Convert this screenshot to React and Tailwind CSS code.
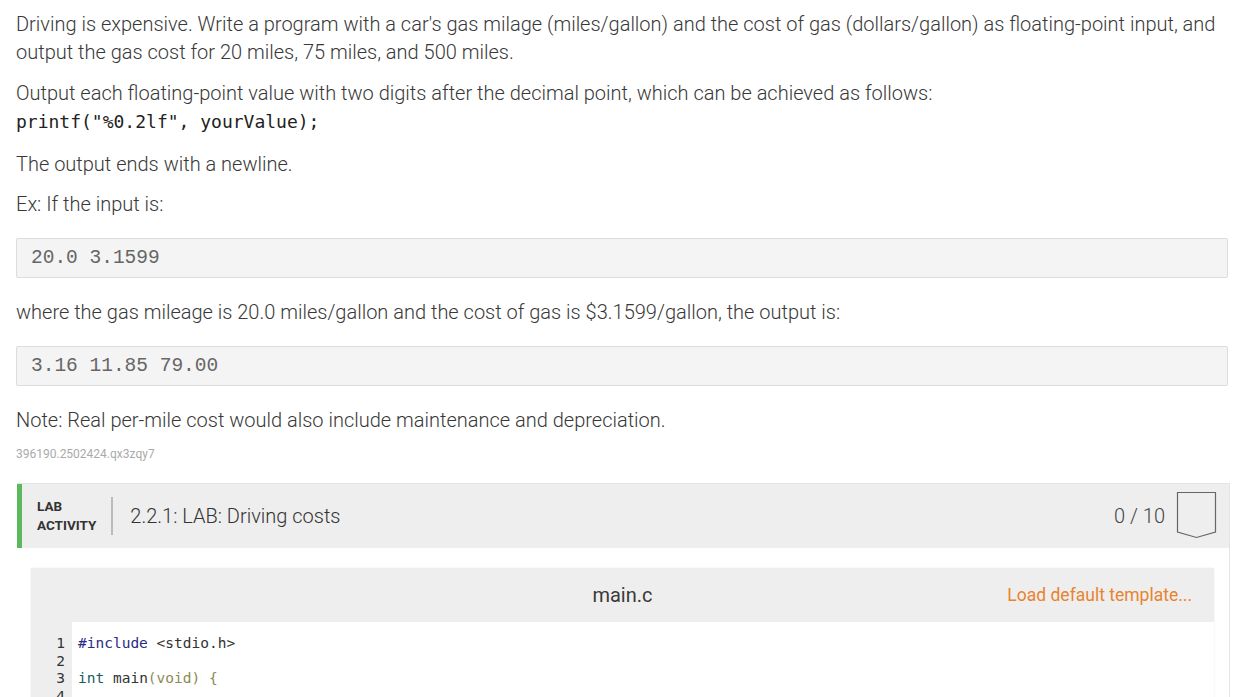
export default function App() {
  const roboto = { fontFamily: 'Roboto, "Liberation Sans", sans-serif' };
  return (
    <div className="bg-white w-[1245px] h-[697px] overflow-hidden text-[#333] pl-[16px] pr-[17px] pt-[10px]" style={roboto}>
      <div className="font-['Roboto',sans-serif] font-light text-[20px] leading-[28px] text-[#383838]">
        <p>
          Driving is expensive. Write a program with a car's gas milage (miles/gallon) and the cost of gas (dollars/gallon) as floating-point input, and output the gas cost for 20 miles, 75 miles, and 500 miles.
        </p>
        <p className="mt-[13px]">
          Output each floating-point value with two digits after the decimal point, which can be achieved as follows:
          <br />
          <code className="font-['DejaVu_Sans_Mono',monospace] text-[18px] font-normal text-[#222]">printf("%0.2lf", yourValue);</code>
        </p>
        <p className="mt-[14px]">The output ends with a newline.</p>
        <p className="mt-[12px]">Ex: If the input is:</p>
        <pre className="mt-[20px] h-[40px] flex items-center bg-[#f4f4f4] border border-[#dcdcdc] rounded-[2px] px-[14px] font-['Liberation_Mono',monospace] text-[19.5px] font-normal text-[#666]">20.0 3.1599</pre>
        <p className="mt-[20px]">where the gas mileage is 20.0 miles/gallon and the cost of gas is $3.1599/gallon, the output is:</p>
        <pre className="mt-[20px] h-[40px] flex items-center bg-[#f4f4f4] border border-[#dcdcdc] rounded-[2px] px-[14px] font-['Liberation_Mono',monospace] text-[19.5px] font-normal text-[#666]">3.16 11.85 79.00</pre>
        <p className="mt-[20px]">Note: Real per-mile cost would also include maintenance and depreciation.</p>
        <p className="mt-[12px] text-[12px] leading-[16px] text-[#aaa] font-normal">396190.2502424.qx3zqy7</p>
      </div>

      <div className="mt-[21px] ml-[1px] mr-[-2px] border border-[#e4e4e4] border-l-0 bg-white">
        <div className="h-[64px] bg-[#eeeeee] border-l-[5px] border-l-[#5cb85c] flex items-center">
          <div className="ml-[15px] text-[13.5px] leading-[19px] font-bold text-[#333] font-['Roboto',sans-serif]">
            <div>LAB</div>
            <div>ACTIVITY</div>
          </div>
          <div className="ml-[15px] w-[2px] h-[38px] bg-[#bbb]"></div>
          <div className="ml-[17px] text-[20px] font-light text-[#333]">2.2.1: LAB: Driving costs</div>
          <div className="ml-auto text-[20px] font-light text-[#444]">0 / 10</div>
          <svg className="ml-[11px] mr-[12px] mb-[2px]" width="41" height="48" viewBox="0 0 41 48">
            <path d="M1.5 1.5 H39.5 V41 L20.5 46.5 L1.5 41 Z" fill="none" stroke="#666" strokeWidth="1.2" />
          </svg>
        </div>
        <div className="pt-[20px] pl-[14px] pr-[15px]">
          <div className="shadow-[0_0_2px_rgba(0,0,0,0.08)]">
            <div className="h-[54px] bg-[#eeeeee] relative flex items-center justify-center">
              <span className="text-[20px] font-normal text-[#3a3a3a]">main.c</span>
              <span className="absolute right-[22px] top-1/2 -translate-y-1/2 text-[17.5px] font-normal text-[#e8832e]">Load default template...</span>
            </div>
            <div className="flex font-['DejaVu_Sans_Mono',monospace] text-[14.5px] leading-[17.5px] pt-[13px] h-[100px]">
              <div className="w-[41px] bg-[#eeeeee] text-right pr-[7px] text-[#333] -mt-[13px] pt-[13px]">
                <div>1</div>
                <div>2</div>
                <div>3</div>
                <div>4</div>
              </div>
              <div className="pl-[6px] text-[#333]">
                <div><span className="text-[#2b2b86]">#include</span> &lt;stdio.h&gt;</div>
                <div>&nbsp;</div>
                <div><span className="text-[#1a5c63]">int</span> <span className="font-normal">main</span><span className="text-[#8b8b55]">(void)</span> <span className="text-[#8b8b55]">{"{"}</span></div>
                <div>&nbsp;</div>
              </div>
            </div>
          </div>
        </div>
      </div>
    </div>
  );
}
